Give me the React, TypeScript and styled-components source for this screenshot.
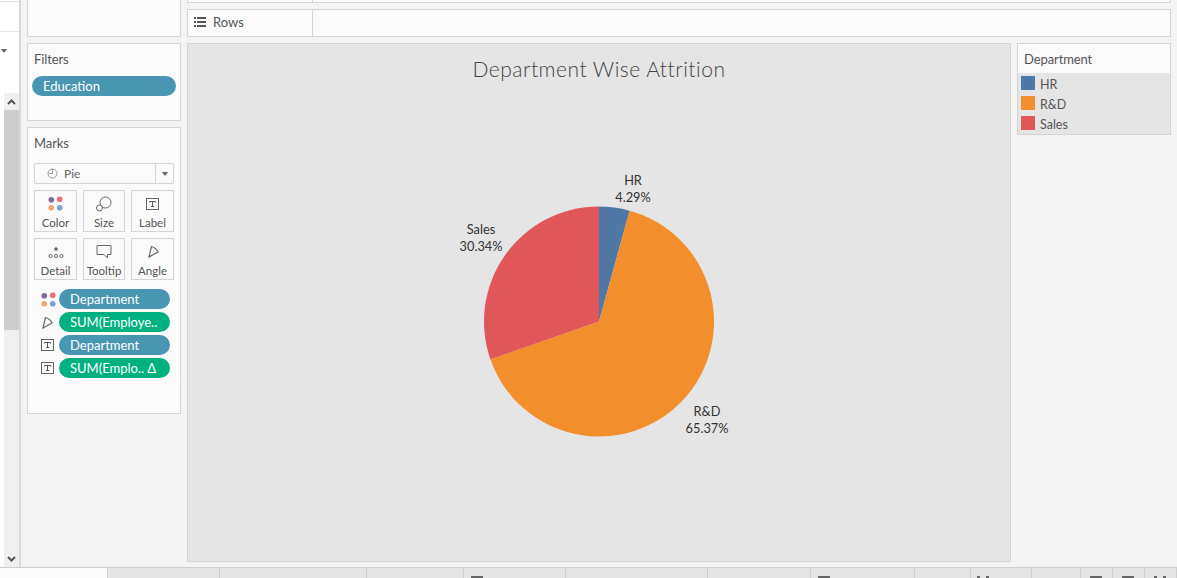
import styled, { createGlobalStyle } from "styled-components";

const GlobalStyle = createGlobalStyle`
  html, body {
    margin: 0;
    padding: 0;
    background: #f3f3f3;
    overflow: hidden;
  }
  * {
    box-sizing: border-box;
  }
`;

const Page = styled.div`
  width: 1177px;
  height: 578px;
  display: flex;
  flex-direction: column;
  overflow: hidden;
  font-family: Lato, "Open Sans", sans-serif;
  color: #555;
`;

const Main = styled.div`
  height: 568px;
  flex-shrink: 0;
  display: flex;
  border-bottom: 1px solid #cfcfcf;
`;

const DataPane = styled.div`
  width: 21px;
  flex-shrink: 0;
  display: flex;
  flex-direction: column;
  background: #fff;
  border-right: 2px solid #d8d8d8;
`;

const PaneTop = styled.div`
  height: 93px;
  flex-shrink: 0;
  padding-top: 1px;
`;

const PaneHeader = styled.div`
  height: 31px;
  border-top: 1px solid #e4e4e4;
  border-bottom: 1px solid #e4e4e4;
`;

const PaneCaret = styled.div`
  width: 0;
  height: 0;
  margin: 17px 0 0 1px;
  border-left: 3px solid transparent;
  border-right: 3px solid transparent;
  border-top: 4px solid #666;
`;

const ScrollTrack = styled.div`
  flex: 1;
  margin-left: 4px;
  display: flex;
  flex-direction: column;
  background: #f0f0f0;
`;

const ScrollButton = styled.div`
  height: 17px;
  flex-shrink: 0;
  display: flex;
  align-items: center;
  justify-content: center;
`;

const ScrollThumb = styled.div`
  height: 220px;
  flex-shrink: 0;
  background: #cdcdcd;
`;

const ScrollGap = styled.div`
  flex: 1;
`;

const Workspace = styled.div`
  flex: 1;
  display: grid;
  grid-template-columns: 154px 824px 154px;
  grid-template-rows: 3px 28px 1fr;
  column-gap: 6px;
  row-gap: 6px;
  padding: 0 6px 5px 6px;
`;

const LeftColumn = styled.div`
  grid-column: 1;
  grid-row: 1 / 4;
  display: flex;
  flex-direction: column;
  gap: 6px;
`;

const Card = styled.div<{ $height: number }>`
  height: ${(p) => p.$height}px;
  flex-shrink: 0;
  background: #fafafa;
  border: 1px solid #d4d4d4;
`;

const TopCard = styled(Card)`
  border-top: none;
`;

const CardTitle = styled.div`
  height: 30px;
  padding: 8px 0 0 6px;
  font-size: 13px;
  line-height: 15px;
  letter-spacing: -0.1px;
  color: #555;
`;

const Pill = styled.div<{ $kind: "dim" | "measure" }>`
  height: 20px;
  border-radius: 10px;
  padding-left: 11px;
  font-size: 13px;
  line-height: 20px;
  color: #fff;
  white-space: nowrap;
  background: ${(p) => (p.$kind === "dim" ? "#4996b2" : "#00b180")};
`;

const FilterPill = styled(Pill)`
  margin: 2px 4px 0;
`;

const MarksBody = styled.div`
  padding: 5px 6px 0;
`;

const MarkSelect = styled.div`
  height: 21px;
  display: flex;
  align-items: center;
  border: 1px solid #d4d4d4;
  border-radius: 2px;
  font-size: 12px;
  color: #666;
`;

const MarkSelectLabel = styled.div`
  flex: 1;
  display: flex;
  align-items: center;
  gap: 6px;
  padding-left: 12px;
`;

const MarkSelectCaret = styled.div`
  width: 18px;
  height: 100%;
  display: flex;
  align-items: center;
  justify-content: center;
  border-left: 1px solid #d4d4d4;
`;

const CaretDown = styled.div`
  width: 0;
  height: 0;
  border-left: 3.5px solid transparent;
  border-right: 3.5px solid transparent;
  border-top: 4px solid #666;
`;

const MarkGrid = styled.div`
  display: grid;
  grid-template-columns: 43px 42px 43px;
  column-gap: 6px;
  row-gap: 6px;
  margin-top: 6px;
`;

const MarkButton = styled.div`
  height: 42px;
  display: flex;
  flex-direction: column;
  align-items: center;
  border: 1px solid #d4d4d4;
  font-size: 11.5px;
  line-height: 14px;
  color: #555;
`;

const MarkIconSlot = styled.div`
  height: 25px;
  flex-shrink: 0;
  display: flex;
  align-items: center;
  justify-content: center;
`;

const MarkRows = styled.div`
  display: flex;
  flex-direction: column;
  gap: 3px;
  margin: 9px 10px 0 13px;
`;

const MarkRow = styled.div`
  display: flex;
  align-items: center;
`;

const MarkRowIcon = styled.div`
  width: 18px;
  flex-shrink: 0;
  display: flex;
  justify-content: flex-start;
`;

const MarkRowPill = styled(Pill)`
  flex: 1;
`;

const Shelf = styled.div<{ $top?: boolean }>`
  grid-column: 2 / 4;
  display: flex;
  background: #fafafa;
  border: 1px solid #d4d4d4;
  border-top: ${(p) => (p.$top ? "none" : "1px solid #d4d4d4")};
`;

const ShelfLabel = styled.div`
  width: 125px;
  flex-shrink: 0;
  display: flex;
  align-items: center;
  gap: 7px;
  padding: 0 0 2px 6px;
  border-right: 1px solid #d4d4d4;
  font-size: 13px;
  color: #555;
`;

const Canvas = styled.div`
  grid-column: 2;
  grid-row: 3;
  display: flex;
  flex-direction: column;
  align-items: center;
  background: #e5e5e5;
  border: 1px solid #d4d4d4;
`;

const ChartTitle = styled.div`
  margin-top: 13px;
  font-size: 21px;
  font-weight: 300;
  line-height: 24px;
  letter-spacing: 0.5px;
  color: #444;
`;

const PieStage = styled.div`
  position: relative;
  width: 300px;
  height: 290px;
  margin-top: 89px;
  flex-shrink: 0;
`;

const PieSvg = styled.svg`
  display: block;
`;

const PieLabel = styled.div<{ $x: number; $y: number }>`
  position: absolute;
  left: ${(p) => p.$x}px;
  top: ${(p) => p.$y}px;
  transform: translateX(-50%);
  text-align: center;
  font-size: 12.75px;
  line-height: 17px;
  white-space: nowrap;
  color: #333;
`;

const Legend = styled.div`
  grid-column: 3;
  grid-row: 3;
  align-self: start;
  height: 92px;
  background: #e5e5e5;
  border: 1px solid #d4d4d4;
`;

const LegendTitle = styled.div`
  height: 29px;
  padding: 7px 0 0 6px;
  background: #fafafa;
  font-size: 13px;
  line-height: 16px;
  letter-spacing: -0.1px;
  color: #555;
`;

const LegendList = styled.div`
  display: flex;
  flex-direction: column;
  gap: 6px;
  padding: 3px 0 0 3px;
`;

const LegendItem = styled.div`
  display: flex;
  align-items: center;
  gap: 5px;
  height: 14px;
  font-size: 12.5px;
  color: #555;
`;

const LegendText = styled.span`
  margin-top: 2px;
`;

const Swatch = styled.div<{ $color: string }>`
  width: 14px;
  height: 14px;
  background: ${(p) => p.$color};
`;

const TabBar = styled.div`
  height: 10px;
  flex-shrink: 0;
  display: flex;
  overflow: hidden;
  background: #e5e5e5;
`;

const Tab = styled.div<{ $width: number; $active?: boolean; $inset?: number }>`
  width: ${(p) => p.$width}px;
  flex-shrink: 0;
  padding: 8px 0 0 ${(p) => p.$inset ?? 0}px;
  background: ${(p) => (p.$active ? "#fafafa" : "#e5e5e5")};
  border-right: 1px solid #cfcfcf;
`;

const TabIcon = styled.div<{ $split?: boolean }>`
  width: 12px;
  height: 2px;
  background: ${(p) =>
    p.$split
      ? "linear-gradient(90deg, #666 0 3px, transparent 3px 9px, #666 9px)"
      : "#666"};
`;

const PIE_COLORS = { hr: "#4e79a7", rd: "#f28e2b", sales: "#e15759" };

const slices = [
  { name: "HR", share: 4.29, color: PIE_COLORS.hr, x: 184, y: 2 },
  { name: "R&D", share: 65.37, color: PIE_COLORS.rd, x: 258, y: 233 },
  { name: "Sales", share: 30.34, color: PIE_COLORS.sales, x: 32, y: 51 },
];

const PIE_X = 150;
const PIE_Y = 151.5;
const PIE_R = 115;

function point(percent: number): string {
  const angle = (percent / 100) * Math.PI * 2;
  const x = PIE_X + PIE_R * Math.sin(angle);
  const y = PIE_Y - PIE_R * Math.cos(angle);
  return `${x.toFixed(2)} ${y.toFixed(2)}`;
}

function slicePath(from: number, share: number): string {
  const large = share > 50 ? 1 : 0;
  return `M${PIE_X} ${PIE_Y}L${point(from)}A${PIE_R} ${PIE_R} 0 ${large} 1 ${point(from + share)}Z`;
}

function ColorIcon() {
  return (
    <svg width="15" height="15" viewBox="0 0 16 16">
      <circle cx="3.5" cy="4" r="3" fill="#80689a" />
      <circle cx="12.5" cy="3.5" r="3" fill="#ee6a7c" />
      <circle cx="3.5" cy="12.5" r="3" fill="#f2a36e" />
      <circle cx="12.5" cy="12.5" r="3" fill="#7ba3cc" />
    </svg>
  );
}

function SizeIcon() {
  return (
    <svg width="16" height="16" viewBox="0 0 16 16" fill="none" stroke="#666">
      <circle cx="9.5" cy="6.5" r="5.5" fill="#fafafa" />
      <circle cx="3.5" cy="12" r="3" fill="#fafafa" />
    </svg>
  );
}

function LabelIcon() {
  return (
    <svg width="13" height="12" viewBox="0 0 13 12" fill="none">
      <rect x="0.5" y="0.5" width="12" height="11" stroke="#666" />
      <path d="M3.5 3.5h6M6.5 3.5v5M5 8.5h3M3.5 3.5v1M9.5 3.5v1" stroke="#555" />
    </svg>
  );
}

function DetailIcon() {
  return (
    <svg width="16" height="14" viewBox="0 0 16 14" fill="none" stroke="#666">
      <circle cx="8" cy="4" r="1.8" fill="#666" stroke="none" />
      <circle cx="2.5" cy="11" r="1.6" />
      <circle cx="8" cy="11" r="1.6" />
      <circle cx="13.5" cy="11" r="1.6" />
    </svg>
  );
}

function TooltipIcon() {
  return (
    <svg width="16" height="15" viewBox="0 0 16 15" fill="none" stroke="#666">
      <path d="M1 1.5H15V10.5H11.5V14L8 10.5H1Z" />
    </svg>
  );
}

function AngleIcon({ size = 12 }: { size?: number }) {
  return (
    <svg width={size} height={size + 1} viewBox="0 0 12 13" fill="none" stroke="#666" strokeWidth="1.2">
      <path d="M2 12L4.5 1.5C8 2.5 10 4.5 11 7Z" />
    </svg>
  );
}

function ClockIcon() {
  return (
    <svg width="11" height="11" viewBox="0 0 11 11" fill="none" stroke="#999">
      <circle cx="5.5" cy="5.5" r="4.5" />
      <path d="M5.5 1V5.5H1.5" />
    </svg>
  );
}

function RowsIcon() {
  return (
    <svg width="12" height="10" viewBox="0 0 12 10" fill="#555">
      <rect x="0" y="0" width="2" height="2" />
      <rect x="3" y="0" width="9" height="2" />
      <rect x="0" y="4" width="2" height="2" />
      <rect x="3" y="4" width="9" height="2" />
      <rect x="0" y="8" width="2" height="2" />
      <rect x="3" y="8" width="9" height="2" />
    </svg>
  );
}

function Chevron({ up }: { up?: boolean }) {
  return (
    <svg width="9" height="6" viewBox="0 0 9 6" fill="none" stroke="#555" strokeWidth="2">
      <path d={up ? "M1 5L4.5 1.5L8 5" : "M1 1L4.5 4.5L8 1"} />
    </svg>
  );
}

const markButtons = [
  { label: "Color", icon: <ColorIcon /> },
  { label: "Size", icon: <SizeIcon /> },
  { label: "Label", icon: <LabelIcon /> },
  { label: "Detail", icon: <DetailIcon /> },
  { label: "Tooltip", icon: <TooltipIcon /> },
  { label: "Angle", icon: <AngleIcon /> },
];

const markRows = [
  { text: "Department", kind: "dim" as const, icon: <ColorIcon /> },
  { text: "SUM(Employe..", kind: "measure" as const, icon: <AngleIcon /> },
  { text: "Department", kind: "dim" as const, icon: <LabelIcon /> },
  { text: "SUM(Emplo..  Δ", kind: "measure" as const, icon: <LabelIcon /> },
];

const tabs: { width: number; active?: boolean; icon?: "bar" | "split"; inset?: number }[] = [
  { width: 108, active: true },
  { width: 112 },
  { width: 147 },
  { width: 97 },
  { width: 102, icon: "bar", inset: 7 },
  { width: 142 },
  { width: 103 },
  { width: 104, icon: "bar", inset: 7 },
  { width: 56 },
  { width: 61, icon: "split", inset: 6 },
  { width: 49 },
  { width: 32, icon: "bar", inset: 9 },
  { width: 32, icon: "bar", inset: 9 },
  { width: 32, icon: "split", inset: 9 },
];

export default function App() {
  let running = 0;
  return (
    <Page>
      <GlobalStyle />
      <Main>
        <DataPane>
          <PaneTop>
            <PaneHeader />
            <PaneCaret />
          </PaneTop>
          <ScrollTrack>
            <ScrollButton>
              <Chevron up />
            </ScrollButton>
            <ScrollThumb />
            <ScrollGap />
            <ScrollButton>
              <Chevron />
            </ScrollButton>
          </ScrollTrack>
        </DataPane>
        <Workspace>
          <LeftColumn>
            <TopCard $height={37} />
            <Card $height={78}>
              <CardTitle>Filters</CardTitle>
              <FilterPill $kind="dim">Education</FilterPill>
            </Card>
            <Card $height={287}>
              <CardTitle>Marks</CardTitle>
              <MarksBody>
                <MarkSelect>
                  <MarkSelectLabel>
                    <ClockIcon />
                    Pie
                  </MarkSelectLabel>
                  <MarkSelectCaret>
                    <CaretDown />
                  </MarkSelectCaret>
                </MarkSelect>
                <MarkGrid>
                  {markButtons.map((button) => (
                    <MarkButton key={button.label}>
                      <MarkIconSlot>{button.icon}</MarkIconSlot>
                      {button.label}
                    </MarkButton>
                  ))}
                </MarkGrid>
              </MarksBody>
              <MarkRows>
                {markRows.map((row) => (
                  <MarkRow key={row.text + row.kind}>
                    <MarkRowIcon>{row.icon}</MarkRowIcon>
                    <MarkRowPill $kind={row.kind}>{row.text}</MarkRowPill>
                  </MarkRow>
                ))}
              </MarkRows>
            </Card>
          </LeftColumn>
          <Shelf $top>
            <ShelfLabel />
          </Shelf>
          <Shelf>
            <ShelfLabel>
              <RowsIcon />
              Rows
            </ShelfLabel>
          </Shelf>
          <Canvas>
            <ChartTitle>Department Wise Attrition</ChartTitle>
            <PieStage>
              <PieSvg width="300" height="290" viewBox="0 0 300 290">
                {slices.map((slice) => {
                  const d = slicePath(running, slice.share);
                  running += slice.share;
                  return <path key={slice.name} d={d} fill={slice.color} />;
                })}
              </PieSvg>
              {slices.map((slice) => (
                <PieLabel key={slice.name} $x={slice.x} $y={slice.y}>
                  {slice.name}
                  <br />
                  {slice.share.toFixed(2)}%
                </PieLabel>
              ))}
            </PieStage>
          </Canvas>
          <Legend>
            <LegendTitle>Department</LegendTitle>
            <LegendList>
              {slices.map((slice) => (
                <LegendItem key={slice.name}>
                  <Swatch $color={slice.color} />
                  <LegendText>{slice.name}</LegendText>
                </LegendItem>
              ))}
            </LegendList>
          </Legend>
        </Workspace>
      </Main>
      <TabBar>
        {tabs.map((tab, i) => (
          <Tab key={i} $width={tab.width} $active={tab.active} $inset={tab.inset}>
            {tab.icon && <TabIcon $split={tab.icon === "split"} />}
          </Tab>
        ))}
      </TabBar>
    </Page>
  );
}
